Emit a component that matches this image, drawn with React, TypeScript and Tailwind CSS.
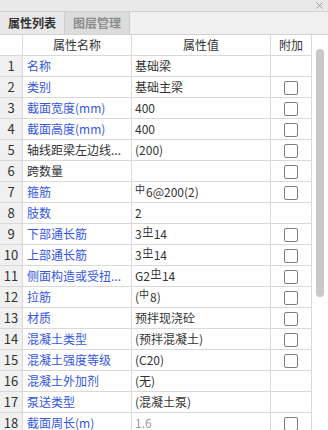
import React from "react";

type Row = {
  name: string;
  value: React.ReactNode;
  blue: boolean;
  check: boolean;
  gray?: boolean;
};

const Phi = () => (
  <span className="inline-block text-[10px] leading-none relative -top-[3px] mr-[1px]">中</span>
);
const Phi3 = () => (
  <span className="inline-block text-[10px] leading-none relative -top-[3px] mx-[1px] border-b border-[#333] pb-[0px]">中</span>
);

const rows: Row[] = [
  { name: "名称", value: "基础梁", blue: true, check: false },
  { name: "类别", value: "基础主梁", blue: true, check: true },
  { name: "截面宽度(mm)", value: "400", blue: true, check: true },
  { name: "截面高度(mm)", value: "400", blue: true, check: true },
  { name: "轴线距梁左边线...", value: "(200)", blue: false, check: true },
  { name: "跨数量", value: "", blue: false, check: true },
  { name: "箍筋", value: (<><Phi />6@200(2)</>), blue: true, check: true },
  { name: "肢数", value: "2", blue: true, check: false },
  { name: "下部通长筋", value: (<>3<Phi3 />14</>), blue: true, check: true },
  { name: "上部通长筋", value: (<>3<Phi3 />14</>), blue: true, check: true },
  { name: "侧面构造或受扭...", value: (<>G2<Phi3 />14</>), blue: true, check: true },
  { name: "拉筋", value: (<>(<Phi />8)</>), blue: true, check: true },
  { name: "材质", value: "预拌现浇砼", blue: true, check: true },
  { name: "混凝土类型", value: "(预拌混凝土)", blue: true, check: true },
  { name: "混凝土强度等级", value: "(C20)", blue: true, check: true },
  { name: "混凝土外加剂", value: "(无)", blue: true, check: false },
  { name: "泵送类型", value: "(混凝土泵)", blue: true, check: false },
  { name: "截面周长(m)", value: "1.6", blue: true, check: true, gray: true },
];

const Checkbox = () => (
  <div className="w-[14px] h-[14px] border border-[#7d7d7d] rounded-[2px] bg-white mt-[1px]" />
);

export default function App() {
  return (
    <div
      className="w-[328px] h-[430px] overflow-hidden bg-white text-[#333] text-[12px]"
      style={{ fontFamily: '"Noto Sans CJK SC", "Noto Sans", sans-serif' }}
    >
      {/* title strip */}
      <div className="h-[12px] bg-[#e9e9e9] border-b border-[#d2d2d2] flex justify-end items-center pr-[5px]">
        <svg width="7" height="7" viewBox="0 0 7 7" className="block">
          <path d="M0.5 0.5 L6.5 6.5 M6.5 0.5 L0.5 6.5" stroke="#9a9a9a" strokeWidth="1" />
        </svg>
      </div>
      {/* tabs */}
      <div className="h-[23px] bg-[#f0f0f0] border-b border-[#d2d2d2] flex">
        <div className="w-[65px] h-full bg-[#e8e8e8] border-r border-[#d2d2d2] flex items-center justify-center font-bold text-[12px] text-[#333]">
          属性列表
        </div>
        <div className="w-[65px] h-full bg-[#dcdcdc] border-r border-[#cdcdcd] flex items-center justify-center font-bold text-[12px] text-[#8c8c8c]">
          图层管理
        </div>
      </div>
      {/* body */}
      <div className="flex">
        <div className="w-[312px] shrink-0">
          {/* header */}
          <div className="flex h-[21px] border-b border-[#d9d9d9]">
            <div className="w-[23px] border-r border-[#d9d9d9] bg-white" />
            <div className="w-[109px] border-r border-[#d9d9d9] flex items-center justify-center">属性名称</div>
            <div className="w-[139px] border-r border-[#d9d9d9] flex items-center justify-center">属性值</div>
            <div className="w-[41px] border-r border-[#d9d9d9] flex items-center justify-center">附加</div>
          </div>
          {rows.map((r, i) => (
            <div key={i} className="flex h-[21px] border-b border-[#d9d9d9]">
              <div className="w-[23px] border-r border-[#d9d9d9] bg-[#f0f0f0] flex items-center justify-center text-[13px] text-[#333]">
                {i + 1}
              </div>
              <div
                className={`w-[109px] border-r border-[#d9d9d9] flex items-center pl-[4px] whitespace-nowrap overflow-hidden ${
                  r.blue ? "text-[#3557df]" : "text-[#333]"
                }`}
              >
                {r.name}
              </div>
              <div
                className={`w-[139px] border-r border-[#d9d9d9] flex items-center pl-[3px] whitespace-nowrap overflow-hidden ${
                  r.gray ? "text-[#9a9a9a]" : "text-[#333]"
                }`}
              >
                {r.value}
              </div>
              <div className="w-[41px] border-r border-[#d9d9d9] flex items-center justify-center">
                {r.check ? <Checkbox /> : null}
              </div>
            </div>
          ))}
        </div>
        {/* scrollbar */}
        <div className="flex-1 flex justify-center pt-[14px] bg-white">
          <div className="w-[8px] h-[248px] rounded-full bg-[#c8c8c8]" />
        </div>
      </div>
    </div>
  );
}
